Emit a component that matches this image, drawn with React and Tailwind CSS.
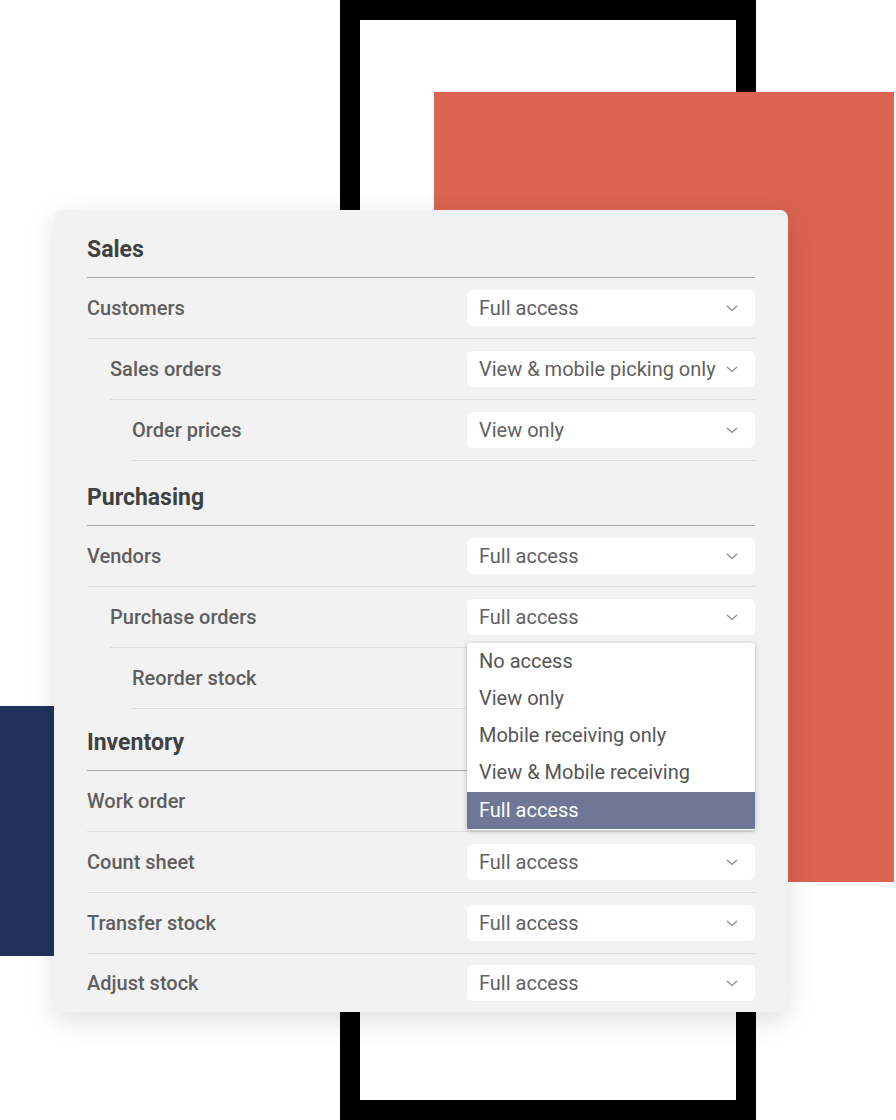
import React from "react";

const sections = [
  {
    title: "Sales",
    head: "h-[68px]",
    rows: [
      { label: "Customers", level: 0, value: "Full access" },
      { label: "Sales orders", level: 1, value: "View & mobile picking only" },
      { label: "Order prices", level: 2, value: "View only" },
    ],
  },
  {
    title: "Purchasing",
    head: "h-[65px]",
    rows: [
      { label: "Vendors", level: 0, value: "Full access" },
      { label: "Purchase orders", level: 1, value: "Full access", open: true },
      { label: "Reorder stock", level: 2, value: "Full access" },
    ],
  },
  {
    title: "Inventory",
    head: "h-[62px]",
    rows: [
      { label: "Work order", level: 0, value: "Full access" },
      { label: "Count sheet", level: 0, value: "Full access" },
      { label: "Transfer stock", level: 0, value: "Full access" },
      { label: "Adjust stock", level: 0, value: "Full access", last: true },
    ],
  },
];

const options = [
  "No access",
  "View only",
  "Mobile receiving only",
  "View & Mobile receiving",
  "Full access",
];

const indents = ["ml-0", "ml-[23px]", "ml-[45px]"];

const Chevron = () => (
  <svg width="12" height="7" viewBox="0 0 12 7" fill="none" className="shrink-0">
    <path d="M1 1l5 4.5L11 1" stroke="#8a8a8a" strokeWidth="1.3" />
  </svg>
);

const Select = ({ value, open }) => (
  <div className="relative w-[288px]">
    <div className="flex h-[36px] items-center justify-between rounded-[6px] bg-white pl-[12px] pr-[17px] text-[20px] text-[#616161]">
      <span>{value}</span>
      <Chevron />
    </div>
    {open && (
      <div className="absolute left-0 top-[44px] z-10 w-full overflow-hidden rounded-[3px] bg-white py-[1px] shadow-[0_1px_5px_rgba(0,0,0,0.25)]">
        {options.map((opt, i) => (
          <div
            key={opt}
            className={
              i === options.length - 1
                ? "flex h-[37px] items-center bg-[#6e7795] pb-[2px] pl-[12px] text-[20px] text-white"
                : "flex h-[37px] items-center pb-[3px] pl-[12px] text-[20px] text-[#555]"
            }
          >
            {opt}
          </div>
        ))}
      </div>
    )}
  </div>
);

const Row = ({ row }) => (
  <div
    className={`${indents[row.level]} flex items-center justify-between ${
      row.last ? "h-[58px]" : "h-[61px] border-b border-[#dddddd]"
    }`}
  >
    <span className="text-[20px] font-medium text-[#5e5e5e]">{row.label}</span>
    <Select value={row.value} open={row.open} />
  </div>
);

export default function App() {
  return (
    <div
      className="relative h-[1120px] w-[896px] overflow-hidden bg-white"
      style={{ fontFamily: "Roboto, 'Noto Sans', sans-serif" }}
    >
      {/* background shapes */}
      <div className="absolute left-[340px] top-0 h-[1120px] w-[416px] border-[20px] border-black bg-white" />
      <div className="absolute left-[434px] top-[92px] h-[790px] w-[460px] bg-[#db6350]" />
      <div className="absolute left-0 top-[706px] h-[250px] w-[54px] bg-[#21335c]" />

      {/* permissions card */}
      <div className="relative ml-[54px] mt-[210px] w-[734px] rounded-[8px] bg-[#f2f2f2] px-[33px] shadow-[0_8px_28px_rgba(0,0,0,0.13)]">
        {sections.map((s) => (
          <div key={s.title}>
            <div className={`flex items-end border-b border-[#ababab] pb-[10px] ${s.head}`}>
              <span className="text-[23px] font-bold text-[#404040]">{s.title}</span>
            </div>
            {s.rows.map((r) => (
              <Row key={r.label} row={r} />
            ))}
          </div>
        ))}
      </div>
    </div>
  );
}
